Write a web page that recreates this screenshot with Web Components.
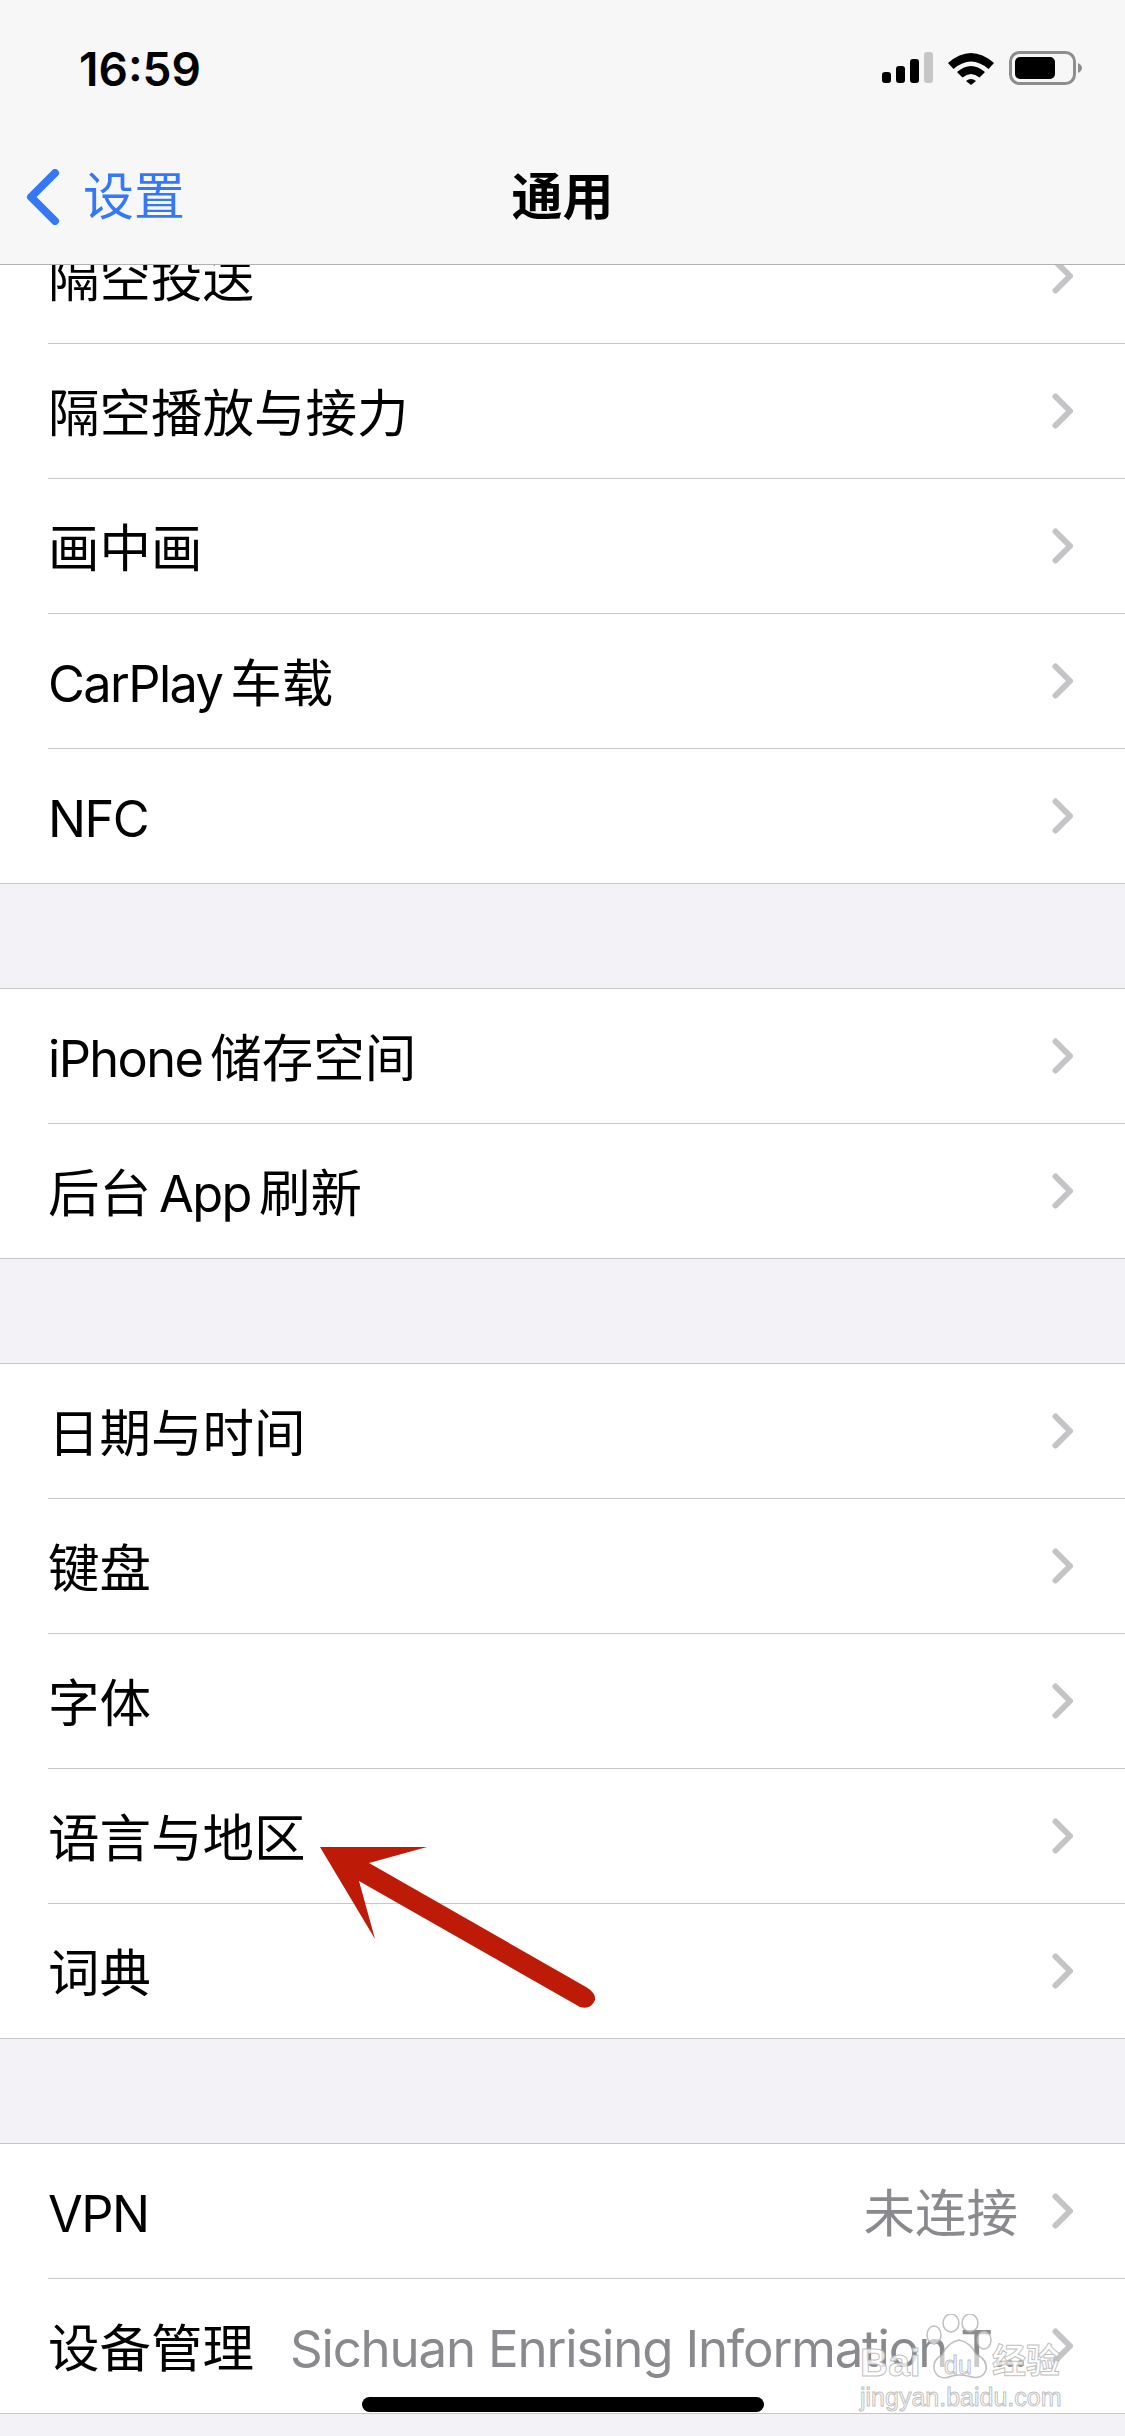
<!DOCTYPE html>
<html lang="zh-CN">
<head>
<meta charset="utf-8">
<title>通用</title>
<style>
  html, body { margin: 0; padding: 0; }
  body {
    width: 1125px;
    height: 2436px;
    overflow: hidden;
    background: #f2f2f7;
    font-family: Inter, "Noto Sans CJK SC", sans-serif;
    color: #000;
  }
  /* latin runs inside the rows: tighter tracking, small gap next to CJK */
  .en { font-size: 50.5px; letter-spacing: -1.6px; }
  .val { font-size: 51px; letter-spacing: -1.2px; }
  .gap-r { margin-right: 8px; }
  .gap-l { margin-left: 8px; }
</style>
</head>
<body>
<phone-screen>
  <nav-bar slot="top" back="设置">通用</nav-bar>

  <settings-group>
    <settings-row>隔空投送</settings-row>
    <settings-row>隔空播放与接力</settings-row>
    <settings-row>画中画</settings-row>
    <settings-row><span class="en gap-r">CarPlay</span>车载</settings-row>
    <settings-row last><span class="en">NFC</span></settings-row>
  </settings-group>

  <settings-group>
    <settings-row><span class="en gap-r">iPhone</span>储存空间</settings-row>
    <settings-row last>后台<span class="en gap-l gap-r">App</span>刷新</settings-row>
  </settings-group>

  <settings-group>
    <settings-row>日期与时间</settings-row>
    <settings-row>键盘</settings-row>
    <settings-row>字体</settings-row>
    <settings-row>语言与地区</settings-row>
    <settings-row last>词典</settings-row>
  </settings-group>

  <settings-group>
    <settings-row><span class="en">VPN</span><span slot="value">未连接</span></settings-row>
    <settings-row last>设备管理<span slot="value" class="val">Sichuan Enrising Information T<span style="letter-spacing:-4px">...</span></span></settings-row>
  </settings-group>

  <arrow-mark slot="over"></arrow-mark>
  <home-indicator slot="over"></home-indicator>
  <baidu-mark slot="over"></baidu-mark>
</phone-screen>

<script>
class PhoneScreen extends HTMLElement {
  constructor() {
    super();
    const shadow = this.attachShadow({mode: 'open'});
    shadow.innerHTML = `
      <style>
        :host {
          display: flex;
          flex-direction: column;
          position: relative;
          width: 1125px;
          height: 2436px;
          overflow: hidden;
        }
        .list {
          flex: 1;
          min-height: 0;
          overflow: hidden;
        }
        /* the list is scrolled: first row sits partly under the nav bar */
        .scroll {
          display: flex;
          flex-direction: column;
          gap: 104px;
          margin-top: -57px;
        }
        ::slotted(settings-group) { flex: none; }
      </style>
      <slot name="top"></slot>
      <div class="list"><div class="scroll"><slot></slot></div></div>
      <slot name="over"></slot>
    `;
  }
}

class NavBar extends HTMLElement {
  constructor() {
    super();
    const shadow = this.attachShadow({mode: 'open'});
    const back = this.getAttribute('back') ?? '';
    shadow.innerHTML = `
      <style>
        :host {
          display: flex;
          flex-direction: column;
          flex: none;
          position: relative;
          z-index: 2;
          height: 265px;
          box-sizing: border-box;
          background: #f7f7f7;
          border-bottom: 1px solid #b2b2b2;
        }
        .status {
          height: 132px;
          display: flex;
          align-items: center;
          justify-content: space-between;
          box-sizing: border-box;
          padding: 6px 43px 0 79px;
        }
        .time {
          font-size: 46px;
          font-weight: 600;
          line-height: 1;
        }
        .nav {
          flex: 1;
          display: grid;
          grid-template-columns: 1fr auto 1fr;
          align-items: center;
          padding: 0 26px 3px;
        }
        .back {
          display: flex;
          align-items: center;
          gap: 23px;
          color: #3478f6;
          font-size: 51px;
          line-height: 1;
        }
        .title {
          font-size: 51px;
          line-height: 1;
          font-weight: 600;
        }
        svg { display: block; }
      </style>
      <div class="status">
        <span class="time">16:59</span>
        <svg width="200" height="36" viewBox="0 0 200 36">
          <rect x="0" y="21" width="9" height="11" rx="3" fill="#000"/>
          <rect x="14" y="15" width="9" height="17" rx="3" fill="#000"/>
          <rect x="28" y="8" width="9" height="24" rx="3" fill="#000"/>
          <rect x="42" y="1" width="9" height="31" rx="3" fill="#c6c6c6"/>
          <path d="M66 12 Q89 -8 112 12 L106.500 18 Q89 3 71.500 18 Z" fill="#000"/>
          <path d="M75 21 Q89 9 103 21 L97.500 26.500 Q89 19.500 80.500 26.500 Z" fill="#000"/>
          <path d="M84 30 Q89 26 94 30 L89 34 Z" fill="#000"/>
          <rect x="128.500" y="1.500" width="64" height="31" rx="9" fill="none" stroke="#8e8e8e" stroke-width="3"/>
          <rect x="133" y="6" width="40" height="22" rx="5" fill="#000"/>
          <path d="M196 12 Q200 14 200 17 Q200 20 196 22 Z" fill="#8e8e8e"/>
        </svg>
      </div>
      <div class="nav">
        <div class="back">
          <svg width="34" height="56" viewBox="0 0 34 56">
            <path d="M29 4 L5 28 L29 52" fill="none" stroke="#3478f6" stroke-width="8" stroke-linecap="round" stroke-linejoin="round"/>
          </svg>
          <span>${back}</span>
        </div>
        <div class="title"><slot></slot></div>
        <div></div>
      </div>
    `;
  }
}

class SettingsGroup extends HTMLElement {
  constructor() {
    super();
    const shadow = this.attachShadow({mode: 'open'});
    shadow.innerHTML = `
      <style>
        :host {
          display: block;
          background: #fff;
          border-top: 1px solid #c6c6c8;
          border-bottom: 1px solid #c6c6c8;
        }
      </style>
      <slot></slot>
    `;
  }
}

class SettingsRow extends HTMLElement {
  constructor() {
    super();
    const shadow = this.attachShadow({mode: 'open'});
    const last = this.hasAttribute('last');
    shadow.innerHTML = `
      <style>
        :host {
          display: block;
          padding-left: 48px;
          font-size: 51.5px;
        }
        .row {
          height: ${last ? 134 : 135}px;
          box-sizing: border-box;
          display: flex;
          align-items: center;
          gap: 36px;
          padding-right: 52px;
          white-space: nowrap;
          ${last ? '' : 'border-bottom: 1px solid #c6c6c8;'}
        }
        .label { flex: none; line-height: 1; margin-top: 6px; }
        .value {
          flex: 1;
          min-width: 0;
          text-align: right;
          color: #8a8a8e;
          line-height: 1;
          margin-top: 6px;
        }
        svg { display: block; flex: none; margin-left: -2px; }
      </style>
      <div class="row">
        <span class="label"><slot></slot></span>
        <span class="value"><slot name="value"></slot></span>
        <svg width="21" height="36" viewBox="0 0 21 36">
          <path d="M3.500 3.500 L18 18 L3.500 32.500" fill="none" stroke="#c4c4c6" stroke-width="6" stroke-linecap="round" stroke-linejoin="round"/>
        </svg>
      </div>
    `;
  }
}

class ArrowMark extends HTMLElement {
  constructor() {
    super();
    const shadow = this.attachShadow({mode: 'open'});
    shadow.innerHTML = `
      <style>
        :host { position: absolute; left: 310px; top: 1840px; z-index: 3; }
        svg { display: block; }
      </style>
      <svg width="300" height="180" viewBox="310 1840 300 180">
        <path d="M320 1847 L427 1847 L369 1863 L586 1987 Q596 1993 595 2000 Q591 2010 580 2007 L359 1881 L375 1939 Z" fill="#bd1a08"/>
      </svg>
    `;
  }
}

class HomeIndicator extends HTMLElement {
  constructor() {
    super();
    const shadow = this.attachShadow({mode: 'open'});
    shadow.innerHTML = `
      <style>
        :host {
          position: absolute;
          left: 362px;
          top: 2397px;
          width: 402px;
          height: 15px;
          border-radius: 8px;
          background: #000;
          z-index: 3;
        }
      </style>
    `;
  }
}

class BaiduMark extends HTMLElement {
  constructor() {
    super();
    const shadow = this.attachShadow({mode: 'open'});
    shadow.innerHTML = `
      <style>
        :host {
          position: absolute;
          left: 860px;
          top: 2314px;
          width: 206px;
          height: 98px;
          z-index: 4;
          display: grid;
          grid-template-rows: 68px 30px;
          color: rgba(255,255,255,.75);
          -webkit-text-stroke: 1px rgba(170,170,170,.75);
          font-family: "Liberation Sans", "Noto Sans CJK SC", sans-serif;
        }
        .top { position: relative; display: flex; align-items: flex-end; }
        .bai { font-size: 39px; font-weight: 700; line-height: 1; }
        .du {
          position: absolute;
          left: 84px;
          top: 39px;
          font-size: 25px;
          line-height: 1;
        }
        .jy {
          position: absolute;
          left: 132px;
          top: 30px;
          font-size: 34px;
          font-weight: 700;
          line-height: 1;
          white-space: nowrap;
        }
        .paw { position: absolute; left: 66px; top: 0; }
        .url {
          font-size: 25px;
          line-height: 30px;
          white-space: nowrap;
        }
      </style>
      <div class="top">
        <svg class="paw" width="66" height="68" viewBox="0 0 66 68">
          <g fill="rgba(255,255,255,.55)" stroke="rgba(170,170,170,.75)" stroke-width="1.500">
            <ellipse cx="8" cy="21" rx="7" ry="9"/>
            <ellipse cx="25" cy="9" rx="8" ry="9"/>
            <ellipse cx="44" cy="9" rx="8" ry="9"/>
            <ellipse cx="58" cy="26" rx="7" ry="9"/>
            <path d="M33 26 Q22 28 16 41 Q5 47 9 58 Q14 67 26 62 Q34 60 42 62 Q56 67 60 56 Q62 46 50 40 Q44 28 33 26 Z"/>
          </g>
        </svg>
        <span class="bai">Bai</span>
        <span class="du">du</span>
        <span class="jy">经验</span>
      </div>
      <div class="url">jingyan.baidu.com</div>
    `;
  }
}

customElements.define('phone-screen', PhoneScreen);
customElements.define('nav-bar', NavBar);
customElements.define('settings-group', SettingsGroup);
customElements.define('settings-row', SettingsRow);
customElements.define('arrow-mark', ArrowMark);
customElements.define('home-indicator', HomeIndicator);
customElements.define('baidu-mark', BaiduMark);
</script>
</body>
</html>
